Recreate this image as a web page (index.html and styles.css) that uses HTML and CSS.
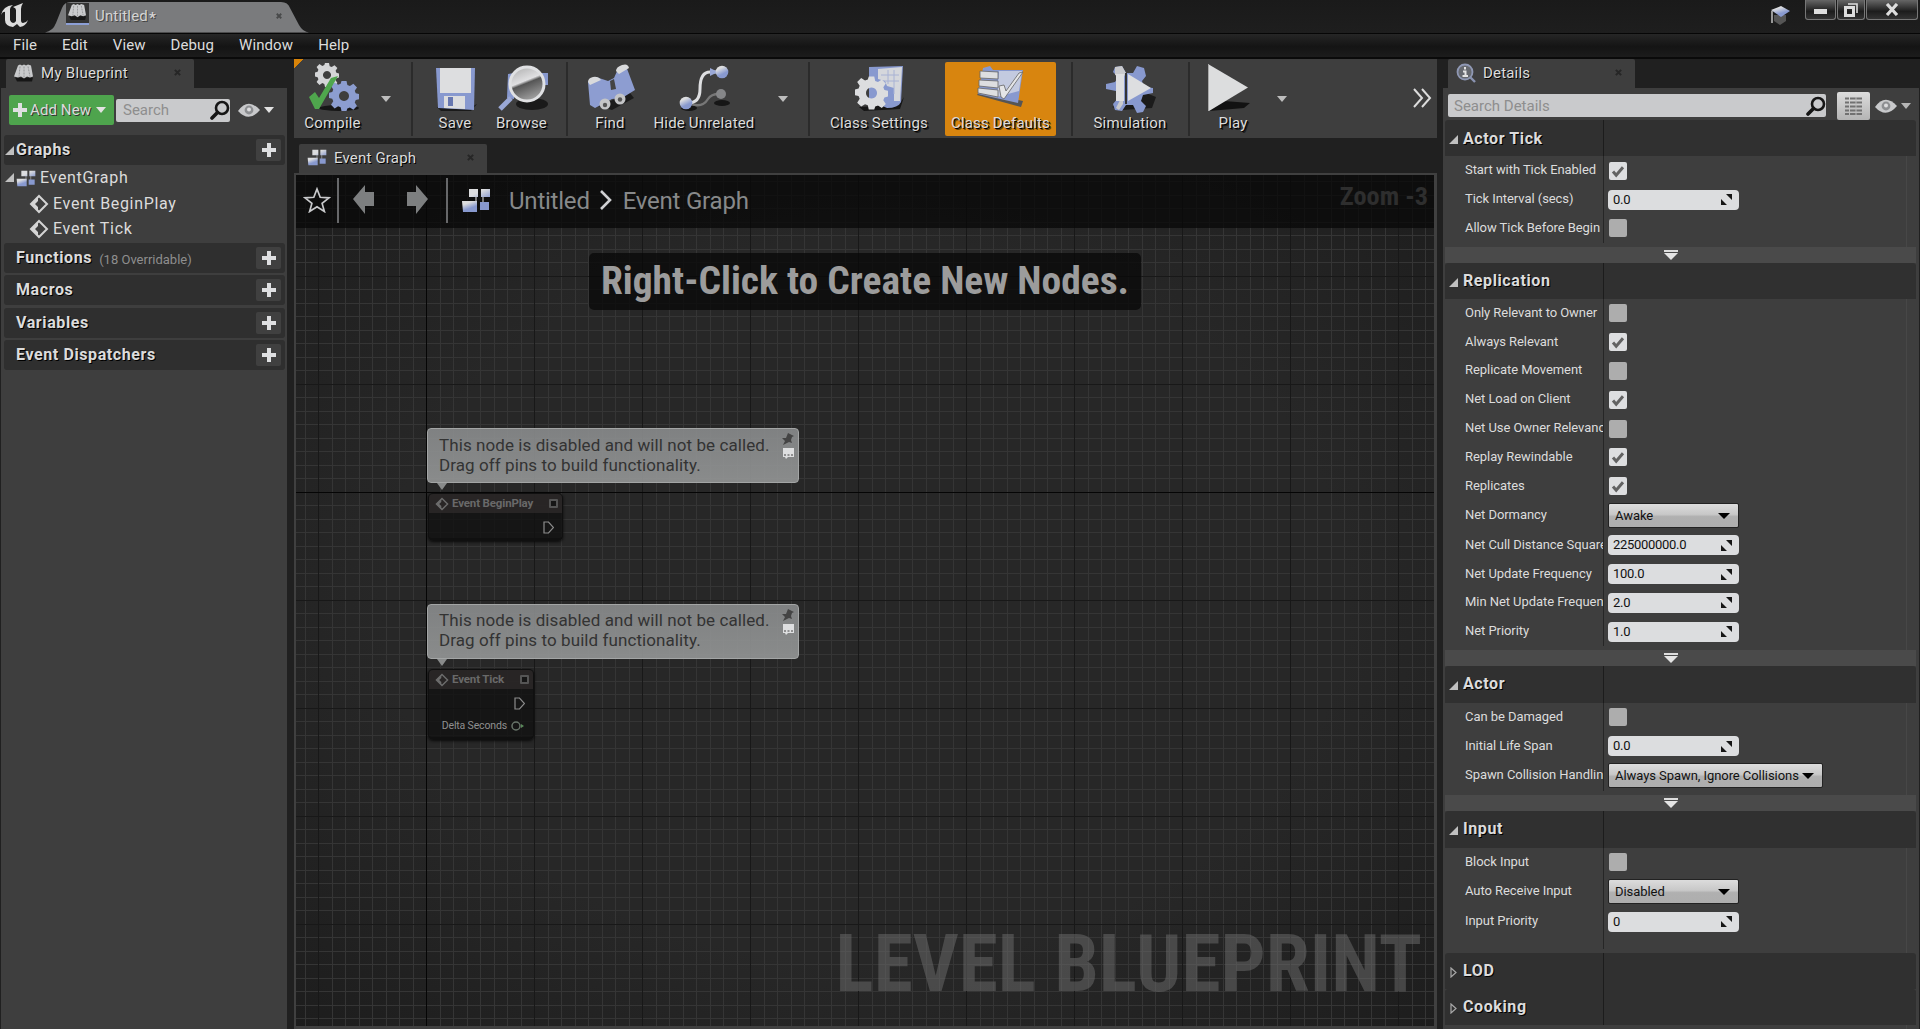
FILE: index.html
```html
<!DOCTYPE html>
<html lang="en">
<head>
<meta charset="utf-8">
<title>Untitled - Level Blueprint</title>
<link rel="stylesheet" href="styles.css">
</head>
<body>
<svg class="defs" width="0" height="0">
  <defs>
    <linearGradient id="mix" x1="0" y1="0" x2="0.5" y2="1"><stop offset="0.3" stop-color="#dcdddf"/><stop offset="0.75" stop-color="#8899cf"/></linearGradient>
    <linearGradient id="orb" x1="0" y1="0" x2="0.4" y2="1"><stop offset="0" stop-color="#aaa"/><stop offset="0.5" stop-color="#e0e0e2"/><stop offset="0.58" stop-color="#555"/><stop offset="1" stop-color="#999"/></linearGradient>
    <pattern id="minor" x="22" y="-7" width="27" height="27" patternUnits="userSpaceOnUse">
      <path d="M0.5 0V27M14.5 0V27M0 0.5H27M0 13.5H27" stroke="#353535" fill="none"/>
    </pattern>
    <pattern id="major" x="22" y="-7" width="108" height="108" patternUnits="userSpaceOnUse">
      <path d="M0.5 0V108M0 0.5H108" stroke="#181818" fill="none"/>
    </pattern>
  </defs>
  <symbol id="book" viewBox="0 0 20 19"><path d="M1 14h18l-1 4H3z" fill="#161616"/><path d="M4 2l2-1 2 1 2-1 2 1 2-1 3 1 2 11-3 1-3-1-3 2-3-2-3 1-4-1z" fill="#c9cacc"/><path d="M10 3v11M6 3L5 13M14 3l2 10" stroke="#8f9092" stroke-width=".9" stroke-dasharray="2 1"/></symbol>
  <symbol id="x" viewBox="0 0 8 8"><path d="M1 1l6 6M7 1L1 7" stroke="currentColor" stroke-width="2.4"/></symbol>
  <symbol id="mag" viewBox="0 0 20 20"><circle cx="12" cy="8" r="6" fill="none" stroke="#161616" stroke-width="2.6"/><path d="M7.5 12.5L2 18" stroke="#161616" stroke-width="3.6" stroke-linecap="round"/></symbol>
  <symbol id="eye" viewBox="0 0 22 14"><path d="M0 8Q10-6 22 7Q11 20 0 8z" fill="#c8c9cb"/><circle cx="11" cy="7" r="4.4" fill="#8d8f92"/><circle cx="11" cy="6.5" r="2" fill="#dcdcde"/></symbol>
  <symbol id="down" viewBox="0 0 10 6"><path d="M0 0h10L5 6z" fill="currentColor"/></symbol>
  <symbol id="plus" viewBox="0 0 14 14"><path d="M5 0h4v5h5v4H9v5H5V9H0V5h5z" fill="#dedfe1"/></symbol>
  <symbol id="open" viewBox="0 0 9 9"><path d="M9 0v9H0z" fill="#c0c0c0"/></symbol>
  <symbol id="closed" viewBox="0 0 7 11"><path d="M1 1v9l5-4.5z" fill="none" stroke="#a8a8a8" stroke-width="1.2"/></symbol>
  <symbol id="graph" viewBox="0 0 30 25"><path d="M15 8v8M22 8v8" stroke="#777" stroke-width="2"/><path d="M8 1h9v8H8zM20 1h9v8h-9zM19 14h9v8h-9z" fill="url(#mix)"/><path d="M1 13h15v11H2z" fill="url(#mix)"/></symbol>
  <symbol id="event" viewBox="0 0 20 20"><path d="M10 2l8 8-8 8-8-8z" fill="none" stroke="currentColor" stroke-width="2"/><path d="M9 3v4l-3 3 3 3v4l-7-7z" fill="currentColor"/></symbol>
  <symbol id="check" viewBox="0 0 18 18"><path d="M4 9.5l3.2 3.7L14 5.3" fill="none" stroke="#626262" stroke-width="3"/></symbol>
  <symbol id="spin" viewBox="0 0 11 11"><path d="M5 0h6v6zM0 5v6h6z" fill="#161616"/></symbol>
  <symbol id="more" viewBox="0 0 14 10"><path d="M0 0h14v2H0z" fill="#ddd"/><path d="M0 3h14L7 10z" fill="#e4e4e4"/></symbol>
  <symbol id="pin" viewBox="0 0 12 12"><path d="M6 0l6 3-2 1-1 3 1 3-3-1L1 12l2-4-3-3 4 0z" fill="#444"/></symbol>
  <symbol id="bubble" viewBox="0 0 13 12"><path d="M1 0h11v9H6l-2 2-1-2H1z" fill="#dedfe0"/><path d="M2 7h2M5.500 7h2M9 7h2" stroke="#777" stroke-width="1.500"/></symbol>
  <symbol id="exec" viewBox="0 0 11 13"><path d="M1 1h4.500l5 5.500-5 5.500H1z" fill="none" stroke="#8c8c8c" stroke-width="1.200"/></symbol>
  <symbol id="gear" viewBox="-12 -12 24 24"><path fill-rule="evenodd" d="M-2-12h4l.7 3.200 2 .8 2.800-1.800 2.900 2.900L8.600-4.200l.8 2 3 .700v4l-3 .7-.8 2 1.800 2.800-2.900 2.900-2.800-1.800-2 .8L2 12h-4l-.7-3.100-2-.8-2.800 1.800-2.900-2.900 1.800-2.800-.8-2-3-.7v-4l3-.7.8-2-1.800-2.800 2.900-2.900 2.800 1.800 2-.8zM0-4a4 4 0 1 0 .01 0z"/></symbol>
</svg>

<header class="titlebar">
  <svg class="logo" width="30" height="28" viewBox="0 0 30 28"><path d="M1 14Q3 5 13 4q-3 2-3 4v11q1 3 3 3 2 0 3-2V9q0-2-3-3l10-4q-2 3-2 6v11q0 3 2 3 3 0 5-3-2 6-8 7l-3-3-4 3q-8-1-8-7v-8q-2-1-4 3z" fill="#dcdcdc"/></svg>
  <div class="doc-tab">
    <svg class="shape" width="264" height="32" viewBox="0 0 264 32" preserveAspectRatio="none"><path d="M0 31.500Q8 30 11 22L17 7Q19 1 26 1H236q7 0 9 6l9 17q4 7 10 7.500z" fill="#7a7b7d"/></svg>
    <span class="doc-icon"><svg width="19" height="18"><use href="#book"/></svg></span>
    <span class="doc-name">Untitled<b>*</b></span>
    <svg class="close" width="6" height="6"><use href="#x"/></svg>
  </div>
  <svg class="cap" width="20" height="19" viewBox="0 0 20 19"><path d="M4 9v6l6 4 6-4V9z" fill="#555"/><path d="M1 4l10-4 9 5-9 6z" fill="url(#mix)"/><path d="M2 5v12" stroke="#999" stroke-width="2"/></svg>
  <div class="winbtns">
    <span class="w1"><svg width="13" height="6"><path d="M0 0h13v5H0z" fill="#ddd"/></svg></span>
    <span class="w2"><svg width="14" height="14" viewBox="0 0 14 14"><path d="M1.500 4.500h8v8h-8z" fill="none" stroke="#ddd" stroke-width="3"/><path d="M4 1h9v9" fill="none" stroke="#ddd" stroke-width="1.600"/></svg></span>
    <span class="w3"><svg width="14" height="13" viewBox="0 0 14 13"><path d="M2 1l10 11M12 1L2 12" stroke="#ddd" stroke-width="3.200"/></svg></span>
  </div>
</header>
<nav class="menu"><span>File</span><span>Edit</span><span>View</span><span>Debug</span><span>Window</span><span>Help</span></nav>

<main class="work">
  <aside class="blueprint">
    <div class="tab"><svg class="tico" width="20" height="20"><use href="#book"/></svg><span>My Blueprint</span><svg class="close" width="7" height="7"><use href="#x"/></svg></div>
    <div class="bp-body">
      <div class="bp-tools">
        <div class="addnew"><svg width="14" height="14"><use href="#plus"/></svg><span>Add New</span><svg class="dn" width="10" height="6"><use href="#down"/></svg></div>
        <div class="search"><span>Search</span><svg width="20" height="20"><use href="#mag"/></svg></div>
        <svg class="eye" width="22" height="14"><use href="#eye"/></svg><svg class="dn" width="10" height="6"><use href="#down"/></svg>
      </div>
      <div class="head first"><svg class="exp" width="9" height="9"><use href="#open"/></svg><h3>Graphs</h3><i><svg width="14" height="14"><use href="#plus"/></svg></i></div>
      <div class="tree">
        <div class="r0"><svg class="exp" width="9" height="9"><use href="#open"/></svg><svg width="20" height="17"><use href="#graph"/></svg><span>EventGraph</span></div>
        <div class="r1"><svg width="20" height="20"><use href="#event"/></svg><span>Event BeginPlay</span></div>
        <div class="r1"><svg width="20" height="20"><use href="#event"/></svg><span>Event Tick</span></div>
      </div>
      <div class="heads">
        <div class="head"><h3>Functions</h3><small>(18 Overridable)</small><i><svg width="14" height="14"><use href="#plus"/></svg></i></div>
        <div class="head"><h3>Macros</h3><i><svg width="14" height="14"><use href="#plus"/></svg></i></div>
        <div class="head"><h3>Variables</h3><i><svg width="14" height="14"><use href="#plus"/></svg></i></div>
        <div class="head"><h3>Event Dispatchers</h3><i><svg width="14" height="14"><use href="#plus"/></svg></i></div>
      </div>
    </div>
  </aside>

  <section class="center">
    <div class="toolbar">
      <div class="tool"><svg width="64" height="52" viewBox="0 0 64 52"><ellipse cx="38" cy="47" rx="20" ry="3" fill="#161616"/><use href="#gear" x="14" y="2" width="24" height="24" fill="#d4d5d7"/><use href="#gear" x="28" y="20" width="30" height="30" fill="#8c9dd0"/><path d="M8 36l6-5 4 6L30 17l7-2L18 48h-4z" fill="#4fa64d"/></svg><span>Compile</span></div>
      <svg class="arrow" width="10" height="6"><use href="#down"/></svg><hr>
      <div class="tool"><svg width="64" height="52" viewBox="0 0 64 52"><path d="M14 46h34l6-3-6 7H18z" fill="#1a1a1a"/><path d="M13 7h39l-1 42-36-2z" fill="#8899cf"/><path d="M17 7h31v25H17z" fill="#dddee0"/><path d="M21 35h21v13l-21-1z" fill="#dcdddf"/><path d="M25 36h5v9h-5z" fill="#6777b0"/></svg><span>Save</span></div>
      <div class="tool"><svg width="64" height="52" viewBox="0 0 64 52"><ellipse cx="42" cy="43" rx="16" ry="6" fill="#1a1a1a"/><path d="M18 13l6-1v26l-7-1zM50 12h8v12h-8z" fill="#8899cf"/><circle cx="37" cy="23" r="17" fill="url(#orb)" stroke="#e0e1e3" stroke-width="3"/><path d="M21 37L10 48" stroke="#9aa8d6" stroke-width="5"/></svg><span>Browse</span></div>
      <hr>
      <div class="tool"><svg width="64" height="52" viewBox="0 0 64 52"><path d="M20 45l32-13 4 5-22 12z" fill="#1b1b1b"/><path d="M10 21l8-5 12 4 6-3 4-9 8-3 9 24-13 8-10 1-17 9-5-3z" fill="#8d9dd1"/><path d="M10 21q0-4 5-5t8 3l-11 5zM38 10q0-4 6-6t7 3l-10 6z" fill="#d9dadc"/><path d="M32 20l4-2 2 10-5 1z" fill="#444"/><circle cx="27" cy="43" r="5.500" fill="#c4c5c7"/><circle cx="42" cy="38" r="5.500" fill="#c4c5c7"/><circle cx="27" cy="44" r="2.200" fill="#555"/><circle cx="42" cy="38.500" r="2.200" fill="#555"/></svg><span>Find</span></div>
      <div class="tool"><svg width="64" height="52" viewBox="0 0 64 52"><ellipse cx="50" cy="42" rx="8" ry="3" fill="#161616"/><ellipse cx="17" cy="47" rx="8" ry="3" fill="#161616"/><path d="M16 42q14 6 20-4 3-5 11-5" fill="none" stroke="#777" stroke-width="2.400"/><circle cx="49" cy="33" r="5" fill="#858688"/><path d="M16 42q12 0 12-14 0-17 10-17h6" fill="none" stroke="#dedfe1" stroke-width="3"/><path d="M38 7l8 4-8 4z" fill="#9aa8d6"/><circle cx="50" cy="11" r="6.300" fill="url(#mix)"/><circle cx="14" cy="42" r="6.300" fill="url(#mix)"/></svg><span>Hide Unrelated</span></div>
      <svg class="arrow" width="10" height="6"><use href="#down"/></svg><hr>
      <div class="tool"><svg width="64" height="52" viewBox="0 0 64 52"><path d="M12 46l40-2 5-8-4 12-36 2z" fill="#161616"/><path d="M22 6l34-1-2 36q-3 6-14 6l-18-8z" fill="#8899cf"/><path d="M31 8l24-2-2 34h-6V27l-7-2-2-5-7-2z" fill="#d5d7dc"/><path d="M34 14h18M36 20h16M41 9v14M47 9v24" stroke="#a8b2d4" stroke-width="1"/><use href="#gear" x="8" y="15" width="33" height="34" fill="#dcdddf"/></svg><span>Class Settings</span></div>
      <div class="tool on"><svg width="64" height="52" viewBox="0 0 64 52"><path d="M8 34l44 12 2-6-44-9z" fill="#555"/><path d="M14 7l7-2 3 4h30l-5 33-40-9z" fill="#8899cf"/><path d="M30 10h23l-3 20-22 6z" fill="#c3cae0"/><path d="M11 10l18 1v7l-18-1zM10 19l19 1v7l-19-2zM9 27l20 2v7l-20-4z" fill="#dddee0" stroke="#666" stroke-width=".8"/><path d="M30 25l5-1 2 6L50 12l4-1-19 27-3-2z" fill="#e4e5e7" stroke="#666" stroke-width=".8"/></svg><span>Class Defaults</span></div>
      <hr>
      <div class="tool"><svg width="64" height="52" viewBox="0 0 64 52"><path d="M14 46l10 3 30-2 4-11-10-4z" fill="#1b1b1b"/><path d="M17 6l7-1 4 7h7l4-7 7 2 2 8-4 5 2 6 9 1v5l-10 2-2 6 5 5-3 6-6 1-4-8h-7l-4 6-7-1-2-6 5-6-2-7-10-2v-5l9-2 3-5-5-5z" fill="#8899cf"/><path d="M17 6l7-1 4 7-3 5-8-3zM18 47l7-14v10l-4 6z" fill="#c9cacd"/><path d="M18 13h8v27h-8zM30 13l23 14-23 13z" fill="#dddee0"/><path d="M28 12v31" stroke="#333" stroke-width="2"/></svg><span>Simulation</span></div>
      <hr>
      <div class="tool"><svg width="64" height="52" viewBox="0 0 64 52"><path d="M8 50l15-10 26 2-6 5z" fill="#121212"/><path d="M7 3l40 23.500L8 50z" fill="#dcddde"/><path d="M7.500 3v47" stroke="#aaa"/></svg><span>Play</span></div>
      <svg class="arrow" width="10" height="6"><use href="#down"/></svg>
      <svg class="chev" width="21" height="20" viewBox="0 0 21 20"><path d="M2 1l8 9-8 9M10 1l8 9-8 9" fill="none" stroke="#dcdcdc" stroke-width="2"/></svg>
    </div>
    <div class="tab gtab"><svg class="tico" width="20" height="17"><use href="#graph"/></svg><span>Event Graph</span><svg class="close" width="7" height="7"><use href="#x"/></svg></div>
    <div class="canvas">
      <svg class="grid" width="100%" height="100%"><rect width="100%" height="100%" fill="url(#minor)"/><rect width="100%" height="100%" fill="url(#major)"/><path d="M130.500 0V851M0 317.500H1138" stroke="#050505"/></svg>
      <div class="crumbs">
        <svg width="28" height="26" viewBox="0 0 28 26"><path d="M14 2l3.200 8.300 8.800.5-6.900 5.600 2.300 8.100L14 19.800l-7.400 4.700 2.300-8.100L2 10.800l8.800-.5z" fill="none" stroke="#c9cacc" stroke-width="1.700"/></svg>
        <u></u>
        <svg class="back" width="22" height="30" viewBox="0 0 22 30"><path d="M0 14L12 0v7h9v14h-9v8z" fill="#7d7f80"/></svg>
        <svg class="fwd" width="22" height="30" viewBox="0 0 22 30"><path d="M22 14L10 0v7H1v14h9v8z" fill="#7d7f80"/></svg>
        <u class="u2"></u>
        <svg class="g" width="30" height="25"><use href="#graph"/></svg>
        <span>Untitled</span>
        <svg class="c" width="12" height="20" viewBox="0 0 12 20"><path d="M1 1l9 9-9 9" fill="none" stroke="#cfd0d2" stroke-width="2.600"/></svg>
        <span>Event Graph</span>
        <em>Zoom -3</em>
      </div>
      <div class="prompt">Right-Click to Create New Nodes.</div>

      <div class="comment c1"><p>This node is disabled and will not be called.<br>Drag off pins to build functionality.</p><div><svg width="12" height="12"><use href="#pin"/></svg><svg width="13" height="12"><use href="#bubble"/></svg></div></div>
      <div class="node n1">
        <div class="ntitle"><svg width="14" height="14"><use href="#event"/></svg><span>Event BeginPlay</span><b></b></div>
        <div class="pinrow"><svg width="11" height="13"><use href="#exec"/></svg></div>
      </div>

      <div class="comment c2"><p>This node is disabled and will not be called.<br>Drag off pins to build functionality.</p><div><svg width="12" height="12"><use href="#pin"/></svg><svg width="13" height="12"><use href="#bubble"/></svg></div></div>
      <div class="node n2">
        <div class="ntitle"><svg width="14" height="14"><use href="#event"/></svg><span>Event Tick</span><b></b></div>
        <div class="pinrow"><svg width="11" height="13"><use href="#exec"/></svg></div>
        <div class="pinrow delta"><span>Delta Seconds</span><svg width="13" height="10" viewBox="0 0 13 10"><circle cx="5" cy="5" r="4" fill="none" stroke="#68756a" stroke-width="1.500"/><path d="M10 3l3 2-3 2z" fill="#5a8a5a"/></svg></div>
      </div>
      <div class="kind">LEVEL BLUEPRINT</div>
    </div>
  </section>

  <aside class="details">
    <div class="tab"><svg class="tico" width="21" height="20" viewBox="0 0 21 20"><circle cx="9" cy="9" r="7.500" fill="#66696f" stroke="#8f98b4" stroke-width="1.800"/><path d="M14 14l5 5" stroke="#8a93b0" stroke-width="2.400"/><path d="M9 4v2.500M7 8.500h2.500V13M6.500 13h5.500" stroke="#e4e4e4" stroke-width="2" fill="none"/></svg><span>Details</span><svg class="close" width="7" height="7"><use href="#x"/></svg></div>
    <div class="dt-body">
      <div class="dt-tools">
        <div class="search"><span>Search Details</span><svg width="20" height="20"><use href="#mag"/></svg></div>
        <div class="list"><svg width="17" height="18" viewBox="0 0 17 18"><path d="M0 1.500h4M5 1.500h12M0 5.500h4M5 5.500h12M0 9.500h4M5 9.500h12M0 13.500h4M5 13.500h12M0 17h4M5 17h12" stroke="#717171" stroke-width="2"/><path d="M11 0v18" stroke="#bbb"/></svg></div>
        <svg class="eye" width="22" height="14"><use href="#eye"/></svg><svg class="dn" width="10" height="6"><use href="#down"/></svg>
      </div>
      <div class="cat c0"><svg class="exp" width="9" height="9"><use href="#open"/></svg><h3>Actor Tick</h3></div>
      <div class="rows tick">
        <div class="row"><label>Start with Tick Enabled</label><div><span class="chk on"><svg width="18" height="18"><use href="#check"/></svg></span></div></div>
        <div class="row"><label>Tick Interval (secs)</label><div><span class="num">0.0<svg width="11" height="11"><use href="#spin"/></svg></span></div></div>
        <div class="row"><label>Allow Tick Before Begin</label><div><span class="chk"></span></div></div>
      </div>
      <div class="expander"><svg width="14" height="10"><use href="#more"/></svg></div>
      <div class="cat"><svg class="exp" width="9" height="9"><use href="#open"/></svg><h3>Replication</h3></div>
      <div class="rows rep">
        <div class="row"><label>Only Relevant to Owner</label><div><span class="chk"></span></div></div>
        <div class="row"><label>Always Relevant</label><div><span class="chk on"><svg width="18" height="18"><use href="#check"/></svg></span></div></div>
        <div class="row"><label>Replicate Movement</label><div><span class="chk"></span></div></div>
        <div class="row"><label>Net Load on Client</label><div><span class="chk on"><svg width="18" height="18"><use href="#check"/></svg></span></div></div>
        <div class="row"><label>Net Use Owner Relevanc</label><div><span class="chk"></span></div></div>
        <div class="row"><label>Replay Rewindable</label><div><span class="chk on"><svg width="18" height="18"><use href="#check"/></svg></span></div></div>
        <div class="row"><label>Replicates</label><div><span class="chk on"><svg width="18" height="18"><use href="#check"/></svg></span></div></div>
        <div class="row tall"><label>Net Dormancy</label><div><span class="sel">Awake<svg width="12" height="6" viewBox="0 0 12 6"><path d="M0 0h12L6 6z"/></svg></span></div></div>
        <div class="row"><label>Net Cull Distance Square</label><div><span class="num">225000000.0<svg width="11" height="11"><use href="#spin"/></svg></span></div></div>
        <div class="row"><label>Net Update Frequency</label><div><span class="num">100.0<svg width="11" height="11"><use href="#spin"/></svg></span></div></div>
        <div class="row"><label>Min Net Update Frequen</label><div><span class="num">2.0<svg width="11" height="11"><use href="#spin"/></svg></span></div></div>
        <div class="row"><label>Net Priority</label><div><span class="num">1.0<svg width="11" height="11"><use href="#spin"/></svg></span></div></div>
      </div>
      <div class="expander"><svg width="14" height="10"><use href="#more"/></svg></div>
      <div class="cat tallcat"><svg class="exp" width="9" height="9"><use href="#open"/></svg><h3>Actor</h3></div>
      <div class="rows act">
        <div class="row"><label>Can be Damaged</label><div><span class="chk"></span></div></div>
        <div class="row"><label>Initial Life Span</label><div><span class="num">0.0<svg width="11" height="11"><use href="#spin"/></svg></span></div></div>
        <div class="row tall"><label>Spawn Collision Handling</label><div><span class="sel wide">Always Spawn, Ignore Collisions<svg width="12" height="6" viewBox="0 0 12 6"><path d="M0 0h12L6 6z"/></svg></span></div></div>
      </div>
      <div class="expander"><svg width="14" height="10"><use href="#more"/></svg></div>
      <div class="cat tallcat"><svg class="exp" width="9" height="9"><use href="#open"/></svg><h3>Input</h3></div>
      <div class="rows last">
        <div class="row"><label>Block Input</label><div><span class="chk"></span></div></div>
        <div class="row tall"><label>Auto Receive Input</label><div><span class="sel">Disabled<svg width="12" height="6" viewBox="0 0 12 6"><path d="M0 0h12L6 6z"/></svg></span></div></div>
        <div class="row"><label>Input Priority</label><div><span class="num">0<svg width="11" height="11"><use href="#spin"/></svg></span></div></div>
      </div>
      <div class="cat"><svg class="exp" width="7" height="11"><use href="#closed"/></svg><h3>LOD</h3></div>
      <div class="cat"><svg class="exp" width="7" height="11"><use href="#closed"/></svg><h3>Cooking</h3></div>
    </div>
  </aside>
</main>
</body>
</html>
```
FILE: styles.css
```css
* { box-sizing: border-box; }
body {
  margin: 0;
  width: 1920px;
  height: 1029px;
  overflow: hidden;
  display: flex;
  flex-direction: column;
  background: #202020;
  color: #dcdcdc;
  font: 15px/20px Roboto, sans-serif;
  letter-spacing: 0.18px;
  white-space: nowrap;
}
svg { display: block; flex: none; }
.defs { position: absolute; }
h3 { margin: 0; font-size: 16px; font-weight: 700; letter-spacing: 0.6px; text-shadow: 1px 1px 0 #000; }

/* title bar and menu */
.titlebar { display: flex; height: 33px; background: linear-gradient(#1a1a1a, #1e1e1e); }
.logo { margin: 1px 0 0; }
.doc-tab { position: relative; width: 264px; margin-left: 15px; height: 32px; margin-top: 1px; display: flex; align-items: center; padding-left: 21px; color: #d4d4d4; }
.doc-tab .shape { position: absolute; left: 0; top: 0; }
.doc-icon { position: relative; width: 23px; height: 22px; margin-top: -6px; background: #333; border-bottom: 2px solid #8c9fd6; display: flex; justify-content: center; }
.doc-name { position: relative; margin: -3px 0 0 6px; width: 180px; text-shadow: 1px 1px 0 #444; }
.doc-name b { font-weight: 700; position: relative; top: 2px; margin-left: 1px; }
.doc-tab .close { position: relative; margin-top: -3px; margin-left: 1px; color: #48494a; }
.cap { margin: 6px 15px 0 auto; }
.winbtns { display: flex; gap: 1px; margin-right: 2px; }
.winbtns span { height: 20px; border: 1px solid #777; border-top: 0; background: linear-gradient(#666, #1d1d1d 60%, #333); display: flex; align-items: center; justify-content: center; border-radius: 0 0 3px 3px; }
.w1 { width: 31px; }
.w1 svg { margin-top: 5px; }
.w2 { width: 28px; }
.w3 { width: 52px; }
.menu { display: flex; gap: 25px; height: 26px; padding: 0 0 0 13px; border-top: 1px solid #060606; border-bottom: 2px solid #0a0a0a; background: linear-gradient(#262626, #141414 55%, #1c1c1c); line-height: 22px; letter-spacing: 0.1px; }

.work { flex: 1; display: grid; grid-template-columns: 287px 1143px 475px; column-gap: 7px; min-height: 0; }
.work > :last-child { margin-left: -1px; }

/* panel tabs */
.tab { display: flex; align-items: center; height: 29px; width: 188px; margin-left: 6px; padding: 0 13px 2px 8px; background: #3e3e3e; text-shadow: 1px 1px 0 #000; border-radius: 2px 2px 0 0; }
.tab .tico { margin-right: 7px; }
.tab .close { margin-left: auto; color: #262626; }

.blueprint, .center, .details { display: flex; flex-direction: column; min-height: 0; min-width: 0; }
.blueprint .tab { letter-spacing: 0.3px; }
.bp-body { flex: 1; margin-left: 1px; background: #3e3e3e; padding: 7px 2px 0 3px; }
.bp-tools { display: flex; align-items: center; height: 30px; padding-left: 5px; }
.addnew { width: 105px; height: 30px; display: flex; align-items: center; padding-left: 4px; background: #4ea44d; letter-spacing: 0.1px; text-shadow: 1px 1px 0 #333; border-radius: 2px; }
.addnew span { margin: 0 5px 0 3px; }
.dn { color: #e2e2e2; }
.search { display: flex; justify-content: space-between; align-items: center; background: #c9cacc; color: #8e8e8e; border-radius: 2px; height: 23px; padding-left: 7px; letter-spacing: 0; }
.bp-tools .search { width: 114px; margin-left: 2px; }
.bp-tools .eye { margin: 0 4px 0 8px; }
.head { position: relative; display: flex; align-items: center; height: 30px; background: #2f2f2f; padding: 0 4px 0 12px; border-radius: 3px; }
.head.first { margin-top: 10px; }
.head .exp { margin: 0 2px 0 -11px; }
.head small { font-size: 13px; color: #8e8e8e; letter-spacing: 0; margin: 3px 0 0 7px; }
.head i { margin-left: auto; width: 25px; height: 22px; background: #404040; display: flex; align-items: center; justify-content: center; border-radius: 2px; }
.heads { display: flex; flex-direction: column; gap: 2.300px; margin-top: 2px; }
.tree { font-size: 16px; letter-spacing: 0.68px; }
.tree > div { display: flex; align-items: center; height: 25px; }
.tree > .r0 { height: 26px; }
.r0 .exp { margin: -2px 2px 0 1px; }
.r0 span { margin-left: 4px; }
.r1 { padding-left: 25px; }
.r1 span { margin-left: 4px; }
.r1 svg { color: #d4d4d4; }

/* toolbar */
.toolbar {
  height: 79px;
  background: #3e3e3e linear-gradient(135deg, #d98409 7px, transparent 7px);
  display: grid;
  grid-template-columns: 77px 30px 22px 64px 69px 22px 64px 124px 34px 18px 122px 121px 22px 94px 24px 64px 34px 1fr;
  justify-items: center;
  align-items: start;
}
.toolbar hr { width: 2px; height: 74px; margin: 3px 0 0; border: 0; background: #2b2b2b; }
.tool { display: flex; flex-direction: column; align-items: center; height: 74px; margin-top: 3px; text-shadow: 1px 1px 0 #000, 2px 2px 0 rgba(0, 0, 0, 0.5); }
.tool svg { margin-top: -1px; }
.tool.on { width: 111px; background: #d8850f; border-radius: 2px; }
.arrow { margin-top: 37px; color: #bdbdbd; }
.chev { justify-self: end; margin: 29px 4px 0 0; }

/* graph */
.gtab { margin: 6px 0 0 5px; }
.canvas { position: relative; flex: 1; border: 2px solid #404040; border-width: 2px 3px 3px 2px; background: radial-gradient(ellipse at center, #272727 60%, #1d1d1d 100%); overflow: hidden; }
.grid { position: absolute; inset: 0; }
.crumbs { position: relative; height: 53px; background: rgba(8, 8, 8, 0.76); display: flex; align-items: center; padding: 0 6px 3px 7px; font-size: 24px; letter-spacing: -0.22px; color: #87898a; }
.crumbs u { width: 2px; height: 45px; background: #67686a; margin: 0 14px 0 6px; }
.crumbs .fwd { margin-left: 31px; }
.crumbs .u2 { margin: 0 13px 0 18px; }
.crumbs span { margin: 1px 0 0 18px; }
.crumbs .c { margin: 0 -7px 0 10px; }
.crumbs em { margin: -8px 0 0 auto; font: 700 26.300px/30px "Roboto Condensed", Roboto, sans-serif; color: #2e2e2e; letter-spacing: 0; }
.prompt { position: absolute; left: 293px; top: 78px; width: 552px; height: 57px; border-radius: 5px; background: rgba(8, 8, 8, 0.76); color: #9c9c9c; font: 700 39.500px/56px "Roboto Condensed", Roboto, sans-serif; letter-spacing: 0; text-align: center; }
.kind { position: absolute; right: 12px; bottom: 15px; font: 700 79.600px/94px "Roboto Condensed", Roboto, sans-serif; letter-spacing: 0; color: rgba(110, 110, 110, 0.5); }
.comment { position: absolute; left: 131px; width: 372px; height: 55px; border: 1px solid #a3a5a5; border-radius: 4px; background: linear-gradient(rgba(137, 139, 140, 0.9), rgba(148, 150, 150, 0.9)); display: flex; justify-content: space-between; padding: 6px 3px 0 11px; color: #333; font-size: 17px; letter-spacing: 0.08px; }
.comment::after { content: ""; position: absolute; left: 9px; top: 54px; border: 5px solid transparent; border-top: 7px solid #898b8b; border-bottom: 0; }
.comment p { margin: 0; line-height: 20px; }
.comment div { display: flex; flex-direction: column; gap: 3px; margin-top: -2px; }
.c1 { top: 253px; }
.c2 { top: 429px; }
.c2 p { margin-top: -1px; }
.node { position: absolute; left: 132px; border-radius: 5px; background: rgba(18, 18, 18, 0.8); border: 1px solid #101010; border-bottom-width: 3px; box-shadow: 0 1px 3px #0a0a0a; }
.n1 { top: 318px; width: 135px; height: 48px; }
.n2 { top: 494px; width: 106px; height: 71px; }
.ntitle { display: flex; align-items: center; height: 19px; padding: 0 4px 0 6px; background: rgba(50, 46, 46, 0.65); border-radius: 4px 4px 0 0; color: #696969; font: 700 11.500px/18px Roboto, sans-serif; letter-spacing: -0.15px; }
.ntitle svg { color: #6c6c6c; }
.ntitle span { margin: -1px 0 0 3px; }
.ntitle b { margin-left: auto; width: 9px; height: 9px; border: 2px solid #555; background: #161616; border-radius: 1px; }
.pinrow { display: flex; justify-content: flex-end; align-items: center; height: 28px; padding-right: 8px; }
.delta { height: 18px; padding-right: 9px; color: #909090; font: 10.500px/18px Roboto, sans-serif; letter-spacing: -0.15px; }
.delta svg { margin-left: 4px; }

/* details */
.dt-body { flex: 1; padding: 3px 3px 0 2px; background: linear-gradient(90deg, transparent 463px, #474747 463px, #474747 464px, transparent 464px) 0 34px no-repeat #3e3e3e; }
.details .tab { margin-left: 5px; width: 187px; }
.details .tab .tico { margin-right: 6px; }
.dt-tools { display: flex; align-items: center; height: 29px; padding-left: 3px; }
.dt-tools .search { width: 378px; padding-left: 6px; }
.list { width: 33px; height: 28px; margin: 0 5px 0 11px; border-radius: 2px; background: linear-gradient(#dcdcdc, #b4b4b4); display: flex; align-items: center; justify-content: center; }
.dt-tools .dn { margin-left: 4px; color: #b5b5b5; }
.cat { height: 36px; background: linear-gradient(90deg, transparent 158px, #1c1c1c 158px, #1c1c1c 159px, transparent 159px), #303030; display: flex; align-items: center; border-radius: 3px 3px 0 0; padding-left: 4px; }
.tallcat { height: 37px; padding-bottom: 1px; }
.c0.cat { padding-top: 1px; }
.cat .exp { margin: 2px 5px 0 0; }
.cat .exp[width="7"] { margin-left: 1px; margin-right: 6px; }
.rows { background: linear-gradient(90deg, transparent 158px, #262626 158px, #262626 159px, transparent 159px) no-repeat; background-size: 100% calc(100% - 4px); font-size: 13px; letter-spacing: -0.06px; }
.rows.tick { height: 91px; padding-top: 0.500px; }
.rows.rep { height: 351px; }
.rows.act { height: 92px; }
.rows.last { height: 105px; }
.row { display: flex; align-items: center; height: 28.800px; }
.row.tall { height: 30.400px; }
.row label { width: 158px; padding-left: 20px; overflow: hidden; margin-top: -1px; }
.row > div { padding-left: 5px; }
.chk { display: block; width: 18px; height: 18px; border-radius: 2px; background: #adadad; margin-left: 1px; }
.chk.on { background: #dddee0; }
.num { display: flex; align-items: center; justify-content: space-between; width: 131px; height: 20px; background: #dcdddf; border-radius: 4px; color: #111; padding: 0 7px 0 5px; letter-spacing: -0.3px; }
.sel { display: flex; align-items: center; justify-content: space-between; width: 131px; height: 25px; border: 1px solid #222; border-radius: 2px; background: linear-gradient(#dcdcdc, #c8c8c8 45%, #b0b0b0 55%, #aeaeae); color: #111; padding: 0 8px 0 6px; }
.sel.wide { width: 215px; }
.expander { height: 16px; background: #4a4a4a; display: flex; align-items: center; justify-content: center; padding-right: 20px; }
```
